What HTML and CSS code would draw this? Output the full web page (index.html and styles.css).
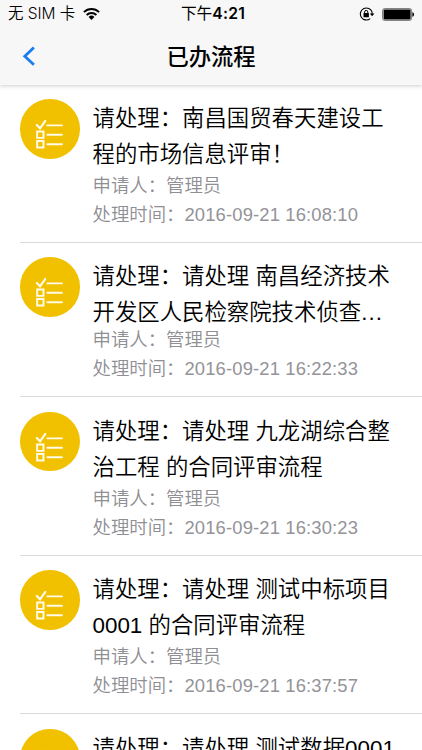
FILE: index.html
```
<!DOCTYPE html>
<html lang="zh-CN">
<head>
<meta charset="utf-8">
<title>已办流程</title>
<link rel="stylesheet" href="styles.css">
</head>
<body>
<svg class="defs" width="0" height="0" aria-hidden="true">
  <symbol id="tasks" viewBox="0 0 60 60">
    <g fill="none" stroke="#fffbe8" stroke-width="2" stroke-linecap="round">
      <path d="M17 26.2l3.2 3.4 5.2-7.4" stroke-width="2.2"/>
      <path d="M27.6 26.6H42.2M27.6 36.1H42.2M27.6 45.6H42.2"/>
      <path d="M17.3 32.8h6.4v6.4h-6.4zM17.3 42.4h6.4v6.4h-6.4z" stroke-linecap="butt"/>
    </g>
  </symbol>
</svg>
<div class="screen">
  <header class="header">
    <div class="status">
      <div class="carrier"><span>无 SIM 卡</span>
        <svg class="wifi" width="17" height="12" viewBox="0 0 17 12"><g fill="none" stroke="#000" stroke-width="1.9"><path d="M.9 4.2a10.8 10.8 0 0 1 15.2 0"/><path d="M3.6 7a7 7 0 0 1 9.8 0"/></g><path d="M5.6 9a4.1 4.1 0 0 1 5.8 0L8.5 11.9z"/></svg>
      </div>
      <div class="time">下午<span class="clock">4:21</span></div>
      <div class="indicators">
        <svg width="16" height="14" viewBox="0 0 16 14"><path d="M13.1 5.2A6 6 0 1 0 11.2 11.6M13.1 5.2v2" fill="none" stroke="#000" stroke-width="1.1"/><path d="M10.8 6.5h4.6l-2.3 2.7z"/><rect x="4.5" y="6.1" width="5.4" height="4.1" rx=".5"/><path d="M5.6 6.4V5a1.6 1.6 0 0 1 3.2 0v1.4" fill="none" stroke="#000"/></svg>
        <svg width="33" height="13" viewBox="0 0 33 13"><rect x=".6" y=".6" width="29" height="11.8" rx="2" fill="none" stroke="#555" stroke-width=".8"/><rect x="1.6" y="1.6" width="27" height="9.8" rx="1"/><path d="M30.4 4.3c2.2.3 2.2 4.1 0 4.4z"/></svg>
      </div>
    </div>
    <div class="nav">
      <svg class="back" width="14" height="22" viewBox="0 0 14 22"><path d="M11.9 1.6L2.8 10.2l9.1 8.6" fill="none" stroke="#177df0" stroke-width="2.8"/></svg>
      <h1>已办流程</h1>
    </div>
  </header>
  <main class="list">
    <article class="item">
      <svg class="avatar"><use href="#tasks"/></svg>
      <div class="body">
        <h2>请处理：南昌国贸春天建设工<br>程的市场信息评审！</h2>
        <p>申请人：管理员</p>
        <p>处理时间：<span class="date">2016-09-21 16:08:10</span></p>
      </div>
    </article>
    <article class="item truncated">
      <svg class="avatar"><use href="#tasks"/></svg>
      <div class="body">
        <h2>请处理：请处理 南昌经济技术<br>开发区人民检察院技术侦查<span class="dots">...</span></h2>
        <p>申请人：管理员</p>
        <p>处理时间：<span class="date">2016-09-21 16:22:33</span></p>
      </div>
    </article>
    <article class="item">
      <svg class="avatar"><use href="#tasks"/></svg>
      <div class="body">
        <h2>请处理：请处理 九龙湖综合整<br>治工程 的合同评审流程</h2>
        <p>申请人：管理员</p>
        <p>处理时间：<span class="date">2016-09-21 16:30:23</span></p>
      </div>
    </article>
    <article class="item">
      <svg class="avatar"><use href="#tasks"/></svg>
      <div class="body">
        <h2>请处理：请处理 测试中标项目<br>0001 的合同评审流程</h2>
        <p>申请人：管理员</p>
        <p>处理时间：<span class="date">2016-09-21 16:37:57</span></p>
      </div>
    </article>
    <article class="item">
      <svg class="avatar"><use href="#tasks"/></svg>
      <div class="body">
        <h2>请处理：请处理 测试数据0001</h2>
      </div>
    </article>
  </main>
</div>
</body>
</html>
```
FILE: styles.css
```
* { box-sizing: border-box; }
body { margin: 0; overflow: hidden; background: #fff; color: #000; font-family: "Liberation Sans", "Noto Sans CJK SC", sans-serif; }
.defs { display: block; }
.screen { height: 750px; overflow: hidden; }
.header { height: 84.5px; background: #f7f7f7; box-shadow: 0 1px 4px rgba(0, 0, 0, .2); }
.status { height: 28px; padding: 0 7px 0 8px; display: grid; grid-template-columns: 1fr auto 1fr; align-items: center; font: 15.5px/28px Inter, "Noto Sans CJK SC", sans-serif; white-space: nowrap; }
.carrier { display: flex; align-items: center; gap: 8px; letter-spacing: -.05px; font-weight: 350; }
.time { font-weight: 400; font-size: 15.7px; margin-left: 3px; }
.clock { font-weight: 600; letter-spacing: .25px; }
.indicators { display: flex; justify-content: flex-end; align-items: center; gap: 7px; }
.nav { height: 56px; padding: 0 22px; display: grid; grid-template-columns: 40px 1fr 40px; align-items: center; }
.back { display: block; }
h1 { margin: 0; padding-top: 2px; text-align: center; font-size: 22.3px; line-height: 56px; font-weight: 500; }
.item { display: flex; height: 158.4px; margin-left: 20px; padding-top: 14.5px; gap: 13px; border-bottom: 1px solid #dadadd; }
.truncated { height: 154.5px; }
.avatar { width: 59.5px; height: 59.5px; flex: none; border-radius: 50%; background: #f1c100; }
.body { padding-top: 2.1px; white-space: nowrap; }
h2 { margin: 0; height: 69.7px; font-size: 22.4px; line-height: 35.8px; font-weight: 350; }
.truncated h2 { height: 65.7px; }
.dots { letter-spacing: 1.1px; }
p { margin: 0; font-size: 18.4px; line-height: 29px; color: #8e8e93; font-weight: 350; }
.date { letter-spacing: .15px; color: #939398; }
```
